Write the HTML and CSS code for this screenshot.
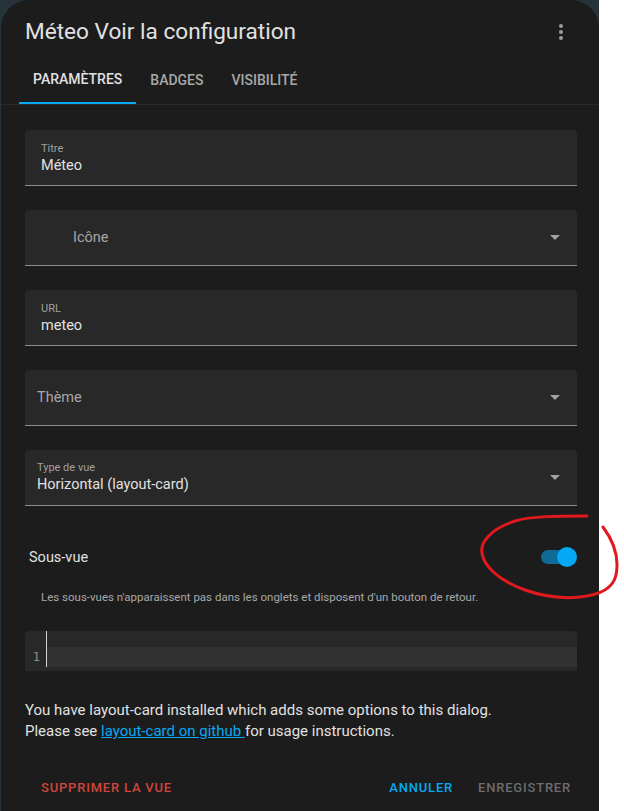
FILE: index.html
```html
<!DOCTYPE html>
<html lang="fr">
<head>
  <meta charset="UTF-8" />
  <title>Méteo Voir la configuration</title>
  <link rel="stylesheet" href="styles.css">
</head>
<body>
  <div class="dialog">
    <div class="dialog-header">
      <h2 class="dialog-title">Méteo Voir la configuration</h2>
      <div class="kebab"><span></span><span></span><span></span></div>
    </div>

    <div class="tabs">
      <div class="tab active">Paramètres</div>
      <div class="tab">Badges</div>
      <div class="tab">Visibilité</div>
    </div>

    <div class="content">
      <div class="field">
        <div class="field-label">Titre</div>
        <div class="field-value">Méteo</div>
      </div>

      <div class="field field-select field-icon">
        <div class="field-placeholder">Icône</div>
        <span class="arrow"></span>
      </div>

      <div class="field">
        <div class="field-label">URL</div>
        <div class="field-value">meteo</div>
      </div>

      <div class="field field-select field-narrow">
        <div class="field-placeholder">Thème</div>
        <span class="arrow"></span>
      </div>

      <div class="field field-select field-narrow">
        <div class="field-text">
          <div class="field-label">Type de vue</div>
          <div class="field-value">Horizontal (layout-card)</div>
        </div>
        <span class="arrow"></span>
      </div>

      <div class="switch-row">
        <span class="switch-label">Sous-vue</span>
        <div class="switch">
          <span class="switch-track"></span>
          <span class="switch-thumb"></span>
        </div>
      </div>
      <p class="helper">Les sous-vues n'apparaissent pas dans les onglets et disposent d'un bouton de retour.</p>

      <div class="editor">
        <div class="gutter"><span class="line-no">1</span></div>
        <div class="code">
          <div class="code-top"></div>
          <div class="code-line"></div>
        </div>
      </div>

      <p class="notice">
        You have layout-card installed which adds some options to this dialog.<br>
        Please see <a href="#">layout-card on github </a>for usage instructions.
      </p>

      <div class="actions">
        <button class="btn btn-danger">Supprimer la vue</button>
        <div class="actions-right">
          <button class="btn btn-primary">Annuler</button>
          <button class="btn btn-disabled">Enregistrer</button>
        </div>
      </div>
    </div>
  </div>

  <!-- hand-drawn annotation around the switch -->
  <svg class="scribble" width="154" height="100" viewBox="0 0 154 100">
    <path d="M117,11 C90,11 60,11 45,16 C20,24 10,38 12,48 C14,62 30,76 55,85 C75,92 92,94 110,92 C130,90 143,84 146,70 C149,55 145,38 133,22"
          fill="none" stroke="#e0191f" stroke-width="3" stroke-linecap="round" />
  </svg>
</body>
</html>
```

FILE: styles.css
```css
body {
  margin: 0;
  min-height: 811px;
  font-family: Roboto, "Noto Sans", sans-serif;
  background: linear-gradient(to right, #26333b 599px, #ffffff 599px);
  position: relative;
}

.dialog {
  width: 598px;
  min-height: 811px;
  margin-left: 1px;
  background: #1c1c1c;
  border-radius: 28px 28px 0 0;
  color: #e1e1e1;
}

.dialog-header {
  display: flex;
  align-items: center;
  justify-content: space-between;
  padding: 18px 36px 0 24px;
}

.dialog-title {
  margin: 0;
  font-size: 22.6px;
  font-weight: 400;
  line-height: 28px;
  color: #e1e1e1;
}

.kebab {
  display: flex;
  flex-direction: column;
  gap: 2px;
}

.kebab span {
  width: 4px;
  height: 4px;
  border-radius: 50%;
  background: #9a9a9a;
}

.tabs {
  display: flex;
  margin-top: 10px;
  padding-left: 18px;
  border-bottom: 1px solid #2a2a2a;
}

.tab {
  height: 48px;
  line-height: 48px;
  padding: 0 14px;
  font-size: 14px;
  font-weight: 500;
  text-transform: uppercase;
  color: #a8a8a8;
  box-sizing: border-box;
}

.tab.active {
  color: #e1e1e1;
  border-bottom: 2px solid #03a9f4;
  line-height: 46px;
}

.content {
  padding: 25px 22px 0 24px;
}

.field {
  height: 56px;
  box-sizing: border-box;
  background: #282828;
  border-bottom: 1px solid #8c8c8c;
  border-radius: 4px 4px 0 0;
  padding: 12px 16px 0;
  margin-bottom: 24px;
}

.field-label {
  font-size: 11px;
  line-height: 14px;
  color: #a0a0a0;
}

.field-value {
  font-size: 14.5px;
  line-height: 20px;
  color: #e1e1e1;
}

.field-select {
  display: flex;
  align-items: center;
  justify-content: space-between;
  padding: 0 17px 0 12px;
}

.field-select .field-text {
  padding-top: 1px;
}

.field-icon {
  padding-left: 48px;
}

.field-placeholder {
  font-size: 14.5px;
  color: #a6a6a6;
}

.arrow {
  width: 0;
  height: 0;
  border-left: 5px solid transparent;
  border-right: 5px solid transparent;
  border-top: 5px solid #a0a0a0;
}

.switch-row {
  display: flex;
  align-items: center;
  justify-content: space-between;
  height: 40px;
  margin-top: 31px;
  padding-left: 4px;
}

.switch-label {
  font-size: 14.5px;
  color: #e1e1e1;
}

.switch {
  position: relative;
  width: 36px;
  height: 20px;
}

.switch-track {
  position: absolute;
  left: 0;
  top: 3px;
  width: 30px;
  height: 14px;
  border-radius: 7px;
  background: #0f6a97;
}

.switch-thumb {
  position: absolute;
  right: 0;
  top: 0;
  width: 20px;
  height: 20px;
  border-radius: 50%;
  background: #03a9f4;
}

.helper {
  margin: 12px 0 0 16px;
  font-size: 11.5px;
  line-height: 16px;
  color: #a8a8a8;
}

.editor {
  display: flex;
  margin-top: 26px;
  height: 40px;
  background: #282828;
  border-radius: 4px 4px 0 0;
}

.gutter {
  width: 21px;
  display: flex;
  align-items: flex-start;
  justify-content: flex-end;
  padding-top: 16px;
  box-sizing: border-box;
  padding-right: 6px;
}

.line-no {
  font-family: "DejaVu Sans Mono", monospace;
  font-size: 12px;
  line-height: 20px;
  color: #8e8e8e;
}

.code {
  flex: 1;
}

.code-top {
  height: 16px;
  border-left: 1px solid #d0d0d0;
}

.code-line {
  height: 20px;
  background: #323232;
  border-left: 1px solid #d0d0d0;
}

.notice {
  margin: 29px 0 0;
  font-size: 15px;
  line-height: 21px;
  color: #e1e1e1;
}

.notice a {
  color: #03a9f4;
}

.actions {
  display: flex;
  justify-content: space-between;
  align-items: center;
  margin: 27px -2px 0 0;
  padding-left: 8px;
}

.actions-right {
  display: flex;
  gap: 9px;
}

.btn {
  height: 36px;
  padding: 0 8px;
  border: none;
  background: none;
  font-family: Roboto, sans-serif;
  font-size: 13px;
  font-weight: 500;
  letter-spacing: 0.8px;
  text-transform: uppercase;
  cursor: pointer;
}

.btn-danger {
  color: #d1443b;
}

.btn-primary {
  color: #03a9f4;
}

.btn-disabled {
  color: #6c6c6c;
}

.scribble {
  position: absolute;
  left: 470px;
  top: 505px;
}
```
